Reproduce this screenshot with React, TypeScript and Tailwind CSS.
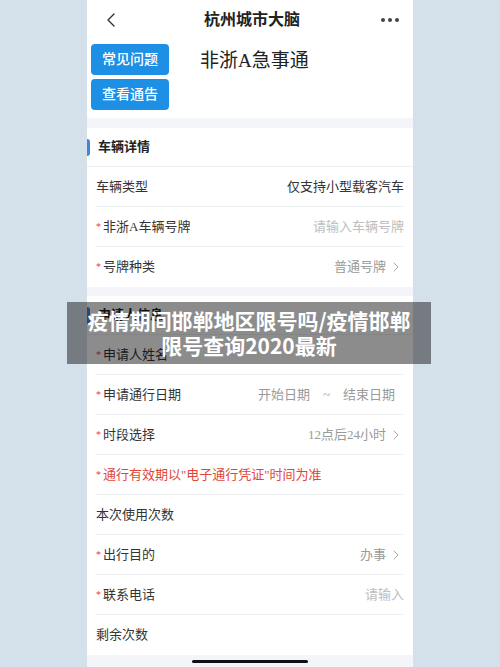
import { ChevronLeft, ChevronRight } from 'lucide-react';

const FONT = { fontFamily: '"Liberation Serif", "Noto Sans CJK SC", sans-serif' };

type Row = {
  label: string;
  required?: boolean;
  value?: string;
  tone?: 'dark' | 'muted' | 'placeholder';
  arrow?: boolean;
};

function Star() {
  return <span className="text-[#e0463a] text-[10px] mr-[2px] leading-none">*</span>;
}

function FormRow({ row, last }: { row: Row; last?: boolean }) {
  const tone =
    row.tone === 'dark' ? 'text-[#333]' : row.tone === 'placeholder' ? 'text-[#bdbdbd]' : 'text-[#9a9a9a]';
  return (
    <div className={`h-10 mx-[9px] flex items-center justify-between ${last ? '' : 'border-b border-[#eef0f2]'}`}>
      <div className="flex items-center text-[13px] text-[#333]">
        {row.required && <Star />}
        <span>{row.label}</span>
      </div>
      {row.value && (
        <div className={`flex items-center text-[13px] ${tone}`}>
          <span>{row.value}</span>
          {row.arrow && <ChevronRight className="w-4 h-4 ml-[2px] text-[#a8a8a8]" strokeWidth={1.5} />}
        </div>
      )}
    </div>
  );
}

function SectionTitle({ title }: { title: string }) {
  return (
    <div className="h-[39px] flex items-center border-b border-[#eef0f2]">
      <div className="w-[3px] h-[17px] bg-[#3f87d6] rounded-r-sm" />
      <span className="ml-2 text-[13px] font-semibold text-[#222]">{title}</span>
    </div>
  );
}

const vehicle: Row[] = [
  { label: '车辆类型', value: '仅支持小型载客汽车', tone: 'dark' },
  { label: '非浙A车辆号牌', required: true, value: '请输入车辆号牌', tone: 'placeholder' },
  { label: '号牌种类', required: true, value: '普通号牌', tone: 'muted', arrow: true },
];

export default function App() {
  return (
    <div className="relative w-[500px] h-[667px] overflow-hidden bg-[#d5e1ea] flex justify-center" style={FONT}>
      <div className="w-[326px] bg-white flex flex-col">
        {/* Nav bar */}
        <div className="h-10 flex items-center justify-between px-3">
          <ChevronLeft className="w-6 h-6 text-[#333]" strokeWidth={1.4} />
          <span className="text-[16px] font-bold text-[#222]">杭州城市大脑</span>
          <div className="flex gap-[3px] pr-[2px]">
            <span className="w-[4px] h-[4px] rounded-full bg-[#444]" />
            <span className="w-[4px] h-[4px] rounded-full bg-[#444]" />
            <span className="w-[4px] h-[4px] rounded-full bg-[#444]" />
          </div>
        </div>

        {/* Top actions */}
        <div className="h-[78px] flex pl-1 pt-1">
          <div className="flex flex-col gap-1">
            <button className="w-[78px] h-[31px] rounded bg-[#1d8fe4] text-white text-[14px] font-medium">常见问题</button>
            <button className="w-[78px] h-[31px] rounded bg-[#1d8fe4] text-white text-[14px] font-medium">查看通告</button>
          </div>
          <span className="ml-[31px] mt-[3px] text-[19px] text-[#222]">非浙A急事通</span>
        </div>

        <div className="h-[10px] bg-[#f3f5f8]" />

        {/* Vehicle card */}
        <SectionTitle title="车辆详情" />
        {vehicle.map((r, i) => (
          <FormRow key={r.label} row={r} last={i === vehicle.length - 1} />
        ))}

        <div className="h-[9px] bg-[#f3f5f8]" />

        {/* Applicant card */}
        <SectionTitle title="申请人信息" />
        <FormRow row={{ label: '申请人姓名', required: true }} />
        <div className="h-10 mx-[9px] flex items-center justify-between border-b border-[#eef0f2]">
          <div className="flex items-center text-[13px] text-[#333]">
            <Star />
            <span>申请通行日期</span>
          </div>
          <div className="flex items-center gap-[13px] mr-[9px] text-[13px] text-[#9a9a9a]">
            <span>开始日期</span>
            <span>~</span>
            <span>结束日期</span>
          </div>
        </div>
        <FormRow row={{ label: '时段选择', required: true, value: '12点后24小时', tone: 'muted', arrow: true }} />
        <div className="h-10 mx-[9px] flex items-center border-b border-[#eef0f2] text-[13px] text-[#e0463a]">
          <span className="text-[10px] mr-[2px]">*</span>
          <span>通行有效期以"电子通行凭证"时间为准</span>
        </div>
        <FormRow row={{ label: '本次使用次数' }} />
        <FormRow row={{ label: '出行目的', required: true, value: '办事', tone: 'muted', arrow: true }} />
        <FormRow row={{ label: '联系电话', required: true, value: '请输入', tone: 'placeholder' }} />
        <FormRow row={{ label: '剩余次数' }} last />

        <div className="flex-1 bg-[#f3f5f8] flex justify-center pt-[5px]">
          <div className="w-[116px] h-[3px] rounded-full bg-[#111]" />
        </div>
      </div>

      {/* Caption overlay */}
      <div className="absolute left-[67px] top-[302px] w-[364px] h-[62px] bg-black/45 flex flex-col items-center justify-center">
        <p className="text-white font-bold text-[21px] leading-[25px] text-center" style={{ fontFamily: '"Noto Sans CJK SC", sans-serif' }}>
          疫情期间邯郸地区限号吗/疫情邯郸
          <br />
          限号查询2020最新
        </p>
      </div>
    </div>
  );
}
